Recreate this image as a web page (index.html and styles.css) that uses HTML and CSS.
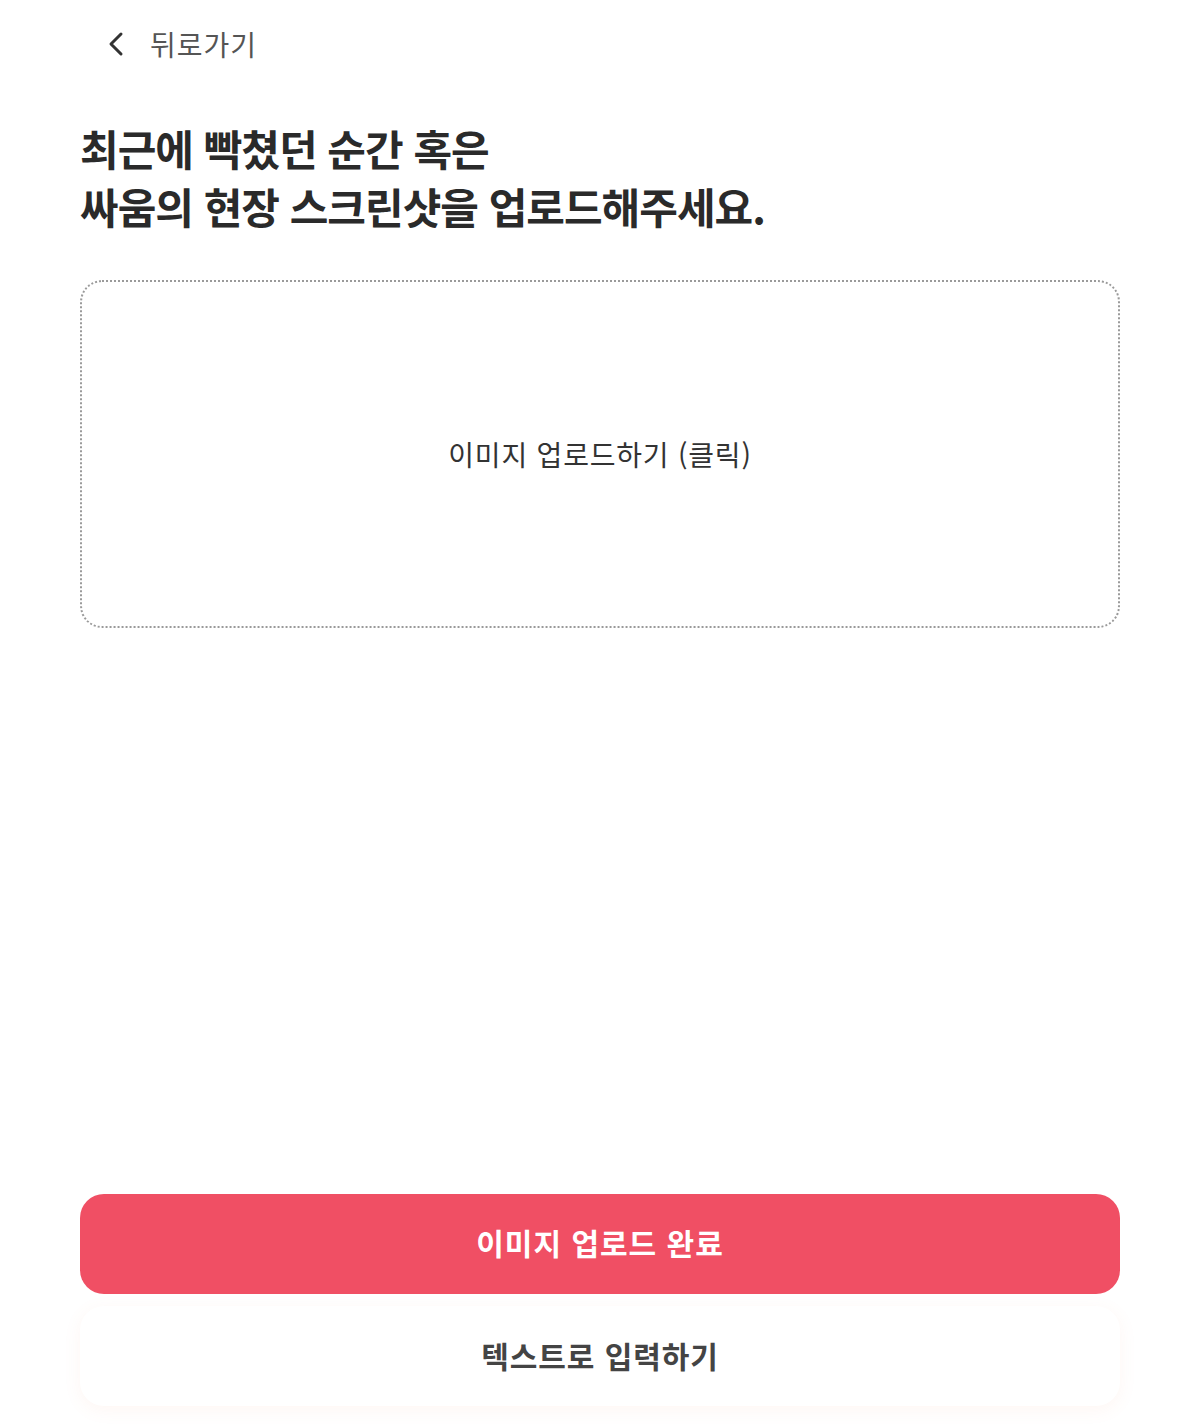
FILE: index.html
```html
<!DOCTYPE html>
<html lang="ko">
<head>
<meta charset="utf-8">
<title>스크린샷 업로드</title>
<link rel="stylesheet" href="styles.css">
</head>
<body>
<div class="page">
  <header class="topbar">
    <button class="back" type="button">
      <svg class="back-icon" viewBox="0 0 20 28" width="20" height="28" aria-hidden="true">
        <path d="M15 4 L5 14 L15 24" fill="none" stroke="#333" stroke-width="3" stroke-linecap="round" stroke-linejoin="round"/>
      </svg>
      <span class="back-label">뒤로가기</span>
    </button>
  </header>

  <h1 class="title">최근에 빡쳤던 순간 혹은<br>싸움의 현장 스크린샷을 업로드해주세요.</h1>

  <div class="dropzone">
    <span class="dropzone-text">이미지 업로드하기 (클릭)</span>
  </div>

  <div class="actions">
    <button class="btn-primary" type="button">이미지 업로드 완료</button>
    <button class="btn-secondary" type="button">텍스트로 입력하기</button>
  </div>
</div>
</body>
</html>
```

FILE: styles.css
```css
* { box-sizing: border-box; }
html, body { margin: 0; padding: 0; background: #fff; }
body {
  font-family: "Noto Sans CJK KR", "Noto Sans", sans-serif;
  color: #222;
}
.page {
  width: 1200px;
  min-height: 1424px;
  padding: 0 80px 18px;
  display: flex;
  flex-direction: column;
}
.topbar {
  height: 88px;
  display: flex;
  align-items: center;
}
.back {
  display: flex;
  align-items: center;
  gap: 24px;
  background: none;
  border: 0;
  padding: 0 0 0 26px;
  cursor: pointer;
  font-family: inherit;
}
.back-icon { display: block; }
.back-label {
  font-size: 28px;
  color: #555;
  letter-spacing: 1px;
}
.title {
  margin: 31px 0 0;
  font-size: 42px;
  line-height: 58px;
  font-weight: 700;
  letter-spacing: -1px;
  color: #2a2a2a;
}
.dropzone {
  margin-top: 45px;
  height: 348px;
  border: 2px dotted #9a9a9a;
  border-radius: 22px;
  display: flex;
  align-items: center;
  justify-content: center;
  cursor: pointer;
}
.dropzone-text {
  font-size: 28px;
  letter-spacing: 0.8px;
  color: #333;
}
.actions {
  margin-top: auto;
  display: flex;
  flex-direction: column;
  gap: 12px;
}
.btn-primary {
  height: 100px;
  padding: 0 0 5px;
  border: 0;
  border-radius: 24px;
  background: #f04f64;
  color: #fff;
  font-family: inherit;
  font-size: 30px;
  letter-spacing: 1px;
  font-weight: 700;
  cursor: pointer;
}
.btn-secondary {
  height: 100px;
  padding: 0 0 2px;
  border: 0;
  border-radius: 24px;
  background: #fff;
  color: #444;
  font-family: inherit;
  font-size: 30px;
  letter-spacing: 0.9px;
  font-weight: 700;
  cursor: pointer;
  box-shadow: 0 4px 18px rgba(240, 130, 90, 0.07);
}
```
